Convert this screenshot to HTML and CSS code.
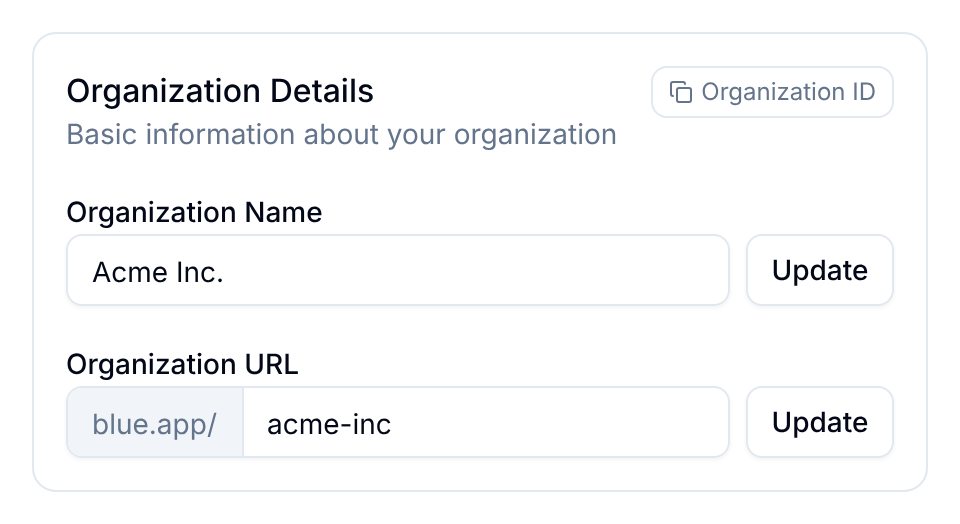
FILE: index.html
```html
<!DOCTYPE html>
<html lang="en">
<head>
<meta charset="utf-8">
<title>Organization Details</title>
<link rel="stylesheet" href="styles.css">
</head>
<body>
<section class="card">
  <header class="head">
    <div class="titles">
      <h2 class="title">Organization Details</h2>
      <p class="sub">Basic information about your organization</p>
    </div>
    <button class="id-btn">
      <svg class="copy" viewBox="0 0 24 24" fill="none" stroke="currentColor" stroke-width="2" stroke-linecap="round" stroke-linejoin="round"><rect x="8" y="8" width="14" height="14" rx="2"/><path d="M4 16c-1.1 0-2-.9-2-2V4c0-1.1.9-2 2-2h10c1.1 0 2 .9 2 2"/></svg>
      <span class="id-text">Organization ID</span>
    </button>
  </header>
  <div class="field">
    <label class="label">Organization Name</label>
    <div class="row">
      <div class="input"><span class="val">Acme Inc.</span></div>
      <button class="update">Update</button>
    </div>
  </div>
  <div class="field">
    <label class="label">Organization URL</label>
    <div class="row">
      <div class="input"><span class="prefix">blue.app/</span><span class="val slug">acme-inc</span></div>
      <button class="update">Update</button>
    </div>
  </div>
</section>
</body>
</html>
```
FILE: styles.css
```css
* { box-sizing: border-box; }
html, body { margin: 0; background: #fff; }
body { padding: 32px; font-family: Inter, "Liberation Sans", sans-serif; color: #020817; width: 960px; height: 524px; overflow: hidden; text-rendering: geometricPrecision; }
.card { border: 2px solid #e2e8f0; border-radius: 24px; padding: 32px; height: 460px; width: 896px; will-change: opacity; }
.head { display: flex; justify-content: space-between; align-items: flex-start; }
.title { margin: 0 0 -1px; padding-top: 1px; font-size: 32px; line-height: 48px; font-weight: 500; }
.sub { margin: 0; font-size: 28px; line-height: 40px; color: #64748b; }
.id-btn { display: flex; align-items: center; gap: 8px; height: 52px; padding: 0 16px; background: #fff; border: 2px solid #e2e8f0; border-radius: 16px; color: #64748b; font: 400 24px Inter, sans-serif; text-rendering: geometricPrecision; }
.id-text { margin-bottom: 2px; }
.copy { width: 24px; height: 24px; }
.field { margin-top: 38px; }
.label { display: block; font-size: 28px; line-height: 40px; font-weight: 500; }
.row { display: flex; gap: 16px; margin-top: 2px; }
.input { flex: 1; display: flex; align-items: stretch; height: 72px; border: 2px solid #e2e8f0; border-radius: 16px; overflow: hidden; font-size: 28px; box-shadow: 0 2px 4px rgba(0,0,0,.05); }
.val { display: flex; align-items: center; padding: 4px 24px 0; }
.slug { padding-left: 23px; }
.prefix { display: flex; align-items: center; padding: 4px 25px 0 24px; background: #f1f5f9; color: #64748b; border-right: 2px solid #e2e8f0; }
.update { width: 148px; height: 72px; background: #fff; border: 2px solid #e2e8f0; border-radius: 16px; font: 500 28px Inter, sans-serif; color: #020817; box-shadow: 0 2px 4px rgba(0,0,0,.05); text-rendering: geometricPrecision; }
```
